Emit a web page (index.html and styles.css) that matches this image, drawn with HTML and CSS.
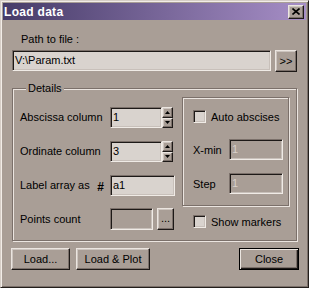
FILE: index.html
```html
<!DOCTYPE html>
<html lang="en">
<head>
    <meta charset="UTF-8">
    <title>Load data</title>
    <link rel="stylesheet" href="styles.css">
</head>
<body>
    <div class="window">
        <div class="titlebar">
            <span class="title">Load data</span>
            <button class="btn close-btn">
                <svg width="8" height="7" viewBox="0 0 8 7"><path d="M0.5 0.5 L7.5 6.5 M7.5 0.5 L0.5 6.5" stroke="#000" stroke-width="1.6"/></svg>
            </button>
        </div>

        <div class="content">
            <div class="path-label">Path to file :</div>
            <div class="path-row">
                <div class="field path-field">V:\Param.txt</div>
                <button class="btn browse">&gt;&gt;</button>
            </div>

            <!-- Группа Details -->
            <fieldset class="group details">
                <legend>Details</legend>
                <div class="cols">
                    <div class="left">
                        <div class="row">
                            <span class="lbl">Abscissa column</span>
                            <div class="field num">1</div>
                            <div class="spin">
                                <button class="btn arrow"><svg width="5" height="3"><polygon points="2.5,0 5,3 0,3" fill="#000"/></svg></button>
                                <button class="btn arrow"><svg width="5" height="3"><polygon points="0,0 5,0 2.5,3" fill="#000"/></svg></button>
                            </div>
                        </div>
                        <div class="row">
                            <span class="lbl">Ordinate column</span>
                            <div class="field num">3</div>
                            <div class="spin">
                                <button class="btn arrow"><svg width="5" height="3"><polygon points="2.5,0 5,3 0,3" fill="#000"/></svg></button>
                                <button class="btn arrow"><svg width="5" height="3"><polygon points="0,0 5,0 2.5,3" fill="#000"/></svg></button>
                            </div>
                        </div>
                        <div class="row">
                            <span class="lbl">Label array as <b class="hash">#</b></span>
                            <div class="field label-field">a1</div>
                        </div>
                        <div class="row">
                            <span class="lbl">Points count</span>
                            <div class="field empty count-field"></div>
                            <button class="btn dots">...</button>
                        </div>
                    </div>

                    <div class="right">
                        <div class="group sub">
                            <label class="check"><span class="box"></span>Auto abscises</label>
                            <div class="sub-row xmin">
                                <span class="sub-lbl">X-min</span>
                                <div class="field empty disabled">1</div>
                            </div>
                            <div class="sub-row">
                                <span class="sub-lbl">Step</span>
                                <div class="field empty disabled">1</div>
                            </div>
                        </div>
                        <label class="check markers"><span class="box"></span>Show markers</label>
                    </div>
                </div>
            </fieldset>

            <div class="buttons">
                <button class="btn load">Load...</button>
                <button class="btn plot">Load &amp; Plot</button>
                <button class="btn close default">Close</button>
            </div>
        </div>
    </div>
</body>
</html>
```

FILE: styles.css
```css
body {
    margin: 0;
    background-color: #a99e96;
    font-family: "Liberation Sans", Arial, sans-serif;
    font-size: 11px;
    color: #000;
}

.window {
    width: 309px;
    height: 288px;
    box-sizing: border-box;
    background-color: #a99e96;
    border: 1px solid;
    border-color: #d6cec7 #231e1b #231e1b #d6cec7;
    box-shadow: inset 1px 1px 0 #f2ede8, inset -1px -1px 0 #7b706a;
    padding: 2px;
}

/* Заголовок окна */
.titlebar {
    height: 17px;
    display: flex;
    align-items: center;
    justify-content: space-between;
    background: linear-gradient(to right, #463b68, #a68ec6);
    padding-left: 1px;
}

.title {
    color: #fff;
    font-weight: bold;
    font-size: 12px;
    letter-spacing: 0.3px;
}

/* Кнопки */
.btn {
    box-sizing: border-box;
    background-color: #a99e96;
    border: 1px solid;
    border-color: #ebe5e0 #1d1917 #1d1917 #ebe5e0;
    box-shadow: inset -1px -1px 0 #7b706a, inset 1px 1px 0 #cdc5bf;
    font: inherit;
    color: #000;
    padding: 0;
    display: flex;
    align-items: center;
    justify-content: center;
}

.close-btn {
    width: 16px;
    height: 14px;
    margin-right: 2px;
}

.content {
    padding: 0 8px 0 9px;
}

.path-label {
    margin-top: 13px;
    padding-left: 9px;
    line-height: 13px;
}

.path-row {
    display: flex;
    gap: 4px;
    margin-top: 4px;
    margin-right: 1px;
}

/* Поля ввода */
.field {
    box-sizing: border-box;
    height: 21px;
    background-color: #d9d3ce;
    border: 1px solid;
    border-color: #7b706a #f0ebe6 #f0ebe6 #7b706a;
    box-shadow: inset 1px 1px 0 #1d1917, inset -1px -1px 0 #c8c0ba;
    padding: 0 2px;
    line-height: 19px;
    white-space: nowrap;
}

.field.empty {
    background-color: #a99e96;
}

.field.disabled {
    color: #d8d0ca;
}

.path-field {
    flex: 1;
}

.browse {
    width: 22px;
    height: 22px;
}

/* Группы */
.group {
    border: 1px solid #7b706a;
    box-shadow: 1px 1px 0 #ebe5e0, inset 1px 1px 0 #ebe5e0;
}

.details {
    margin: 10px 1px 0 0;
    padding: 0 0 10px 7px;
    min-width: 0;
}

.details legend {
    margin-left: 6px;
    padding: 0 2px;
    line-height: 13px;
    background-color: #a99e96;
}

.cols {
    display: flex;
    gap: 7px;
    padding-top: 2px;
}

.left {
    display: flex;
    flex-direction: column;
    gap: 12px;
    margin-top: 9px;
    width: 155px;
}

.row {
    display: flex;
    align-items: center;
    height: 22px;
}

.lbl {
    width: 90px;
    box-sizing: border-box;
    padding-right: 6px;
    display: flex;
    justify-content: space-between;
    align-items: center;
}

.hash {
    font-size: 12px;
    margin-top: 3px;
}

.num {
    width: 52px;
}

.spin {
    display: flex;
    flex-direction: column;
    width: 11px;
}

.arrow {
    width: 11px;
    height: 11px;
}

.arrow + .arrow {
    height: 10px;
}

.label-field {
    width: 65px;
}

.count-field {
    width: 43px;
    height: 22px;
}

.dots {
    width: 17px;
    height: 22px;
    margin-left: 4px;
    padding-bottom: 3px;
}

.right {
    display: flex;
    flex-direction: column;
}

.sub {
    width: 107px;
    height: 109px;
    box-sizing: border-box;
    padding: 12px 0 0 10px;
}

.check {
    display: flex;
    align-items: center;
    gap: 5px;
    height: 13px;
}

.box {
    width: 13px;
    height: 13px;
    box-sizing: border-box;
    background-color: #d9d3ce;
    border: 1px solid;
    border-color: #7b706a #f0ebe6 #f0ebe6 #7b706a;
    box-shadow: inset 1px 1px 0 #1d1917, inset -1px -1px 0 #c8c0ba;
}

.sub-row {
    display: flex;
    align-items: center;
    margin-top: 13px;
}

.sub-row.xmin {
    margin-top: 16px;
}

.sub-lbl {
    width: 36px;
}

.sub-row .field {
    width: 54px;
}

.markers {
    margin: 9px 0 0 11px;
}

/* Нижние кнопки */
.buttons {
    display: flex;
    gap: 6px;
    margin: 7px -1px 0 -1px;
}

.buttons .btn {
    height: 22px;
}

.load {
    width: 59px;
}

.plot {
    width: 74px;
}

.close {
    width: 60px;
    margin-left: auto;
}

.close.default {
    border: 1px solid #000;
    box-shadow: inset 1px 1px 0 #ebe5e0, inset -1px -1px 0 #1d1917, inset -2px -2px 0 #7b706a;
}
```
